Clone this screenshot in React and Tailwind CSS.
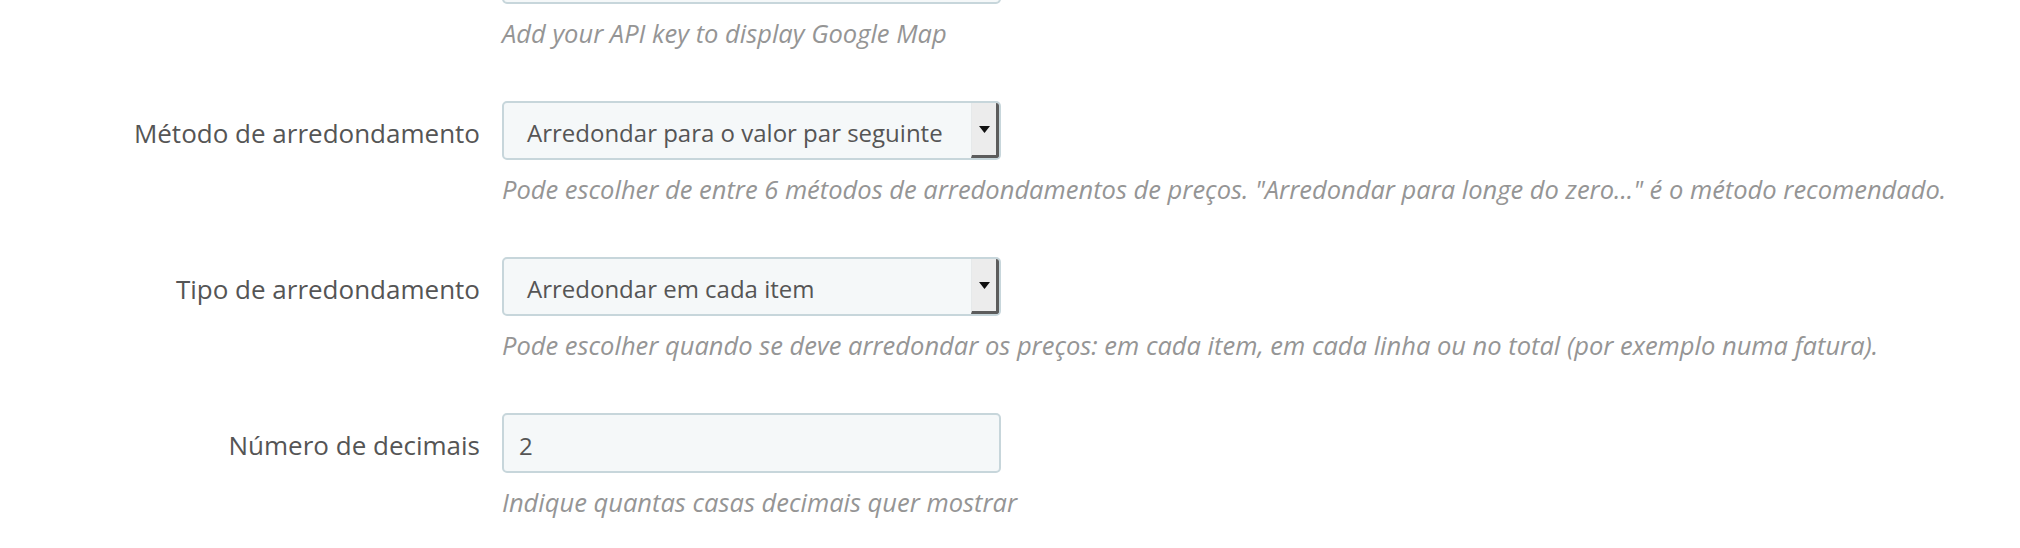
import React from 'react';

const font = { fontFamily: '"Open Sans", "Noto Sans", sans-serif' };

const rows = [
  {
    label: 'Método de arredondamento',
    type: 'select',
    value: 'Arredondar para o valor par seguinte',
    help: 'Pode escolher de entre 6 métodos de arredondamentos de preços. "Arredondar para longe do zero..." é o método recomendado.',
  },
  {
    label: 'Tipo de arredondamento',
    type: 'select',
    value: 'Arredondar em cada item',
    help: 'Pode escolher quando se deve arredondar os preços: em cada item, em cada linha ou no total (por exemplo numa fatura).',
  },
  {
    label: 'Número de decimais',
    type: 'input',
    value: '2',
    help: 'Indique quantas casas decimais quer mostrar',
  },
];

const Select = ({ value }) => (
  <div className="flex h-[59px] w-[499px] items-stretch rounded-[5px] border-2 border-[#c7d6db] bg-[#f5f8f9] overflow-hidden">
    <div className="flex flex-1 items-center pl-[23px] pt-[5px] text-[24px] text-[#555]">{value}</div>
    <div className="flex w-[28px] items-center justify-center border-l border-[#e6e9ea] border-r-[3px] border-b-[3px] border-r-[#5c5c5c] border-b-[#5c5c5c] bg-[#ececec]">
      <svg width="11" height="7" viewBox="0 0 11 7">
        <path d="M0 0 L11 0 L5.5 7 Z" fill="#111" />
      </svg>
    </div>
  </div>
);

const Input = ({ value }) => (
  <div className="flex h-[60px] w-[499px] items-center rounded-[5px] border-2 border-[#c7d6db] bg-[#f5f8f9] pl-[15px] pt-[5px] text-[24px] text-[#555]">
    {value}
  </div>
);

const Help = ({ children }) => (
  <p className="mt-[12px] text-[25.5px] italic leading-[34px] text-[#959595] whitespace-nowrap">{children}</p>
);

export default function App() {
  return (
    <div className="min-h-[548px] w-[2020px] overflow-hidden bg-white" style={font}>
      <div className="-mt-[56px] flex flex-col gap-[51px]">
        <div className="flex items-start">
          <div className="w-[502px] shrink-0" />
          <div className="flex flex-col">
            <Input value="" />
            <Help>Add your API key to display Google Map</Help>
          </div>
        </div>
        {rows.map(row => (
          <div key={row.label} className="flex items-start">
            <div className="flex h-[59px] w-[480px] shrink-0 items-center justify-end pt-[5px] text-[26px] text-[#555]">
              {row.label}
            </div>
            <div className="ml-[22px] flex flex-col">
              {row.type === 'select' ? <Select value={row.value} /> : <Input value={row.value} />}
              <Help>{row.help}</Help>
            </div>
          </div>
        ))}
      </div>
    </div>
  );
}
